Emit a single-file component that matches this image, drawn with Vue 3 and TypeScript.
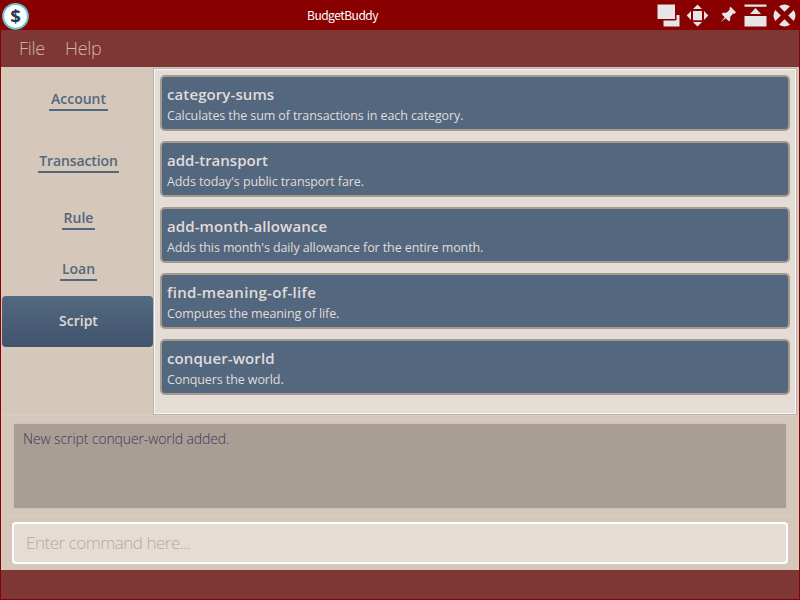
<script setup lang="ts">
import { ref } from 'vue'

interface Tab { name: string; cls: string }
interface Script { name: string; description: string; cls: string }

const tabs: Tab[] = [
  { name: 'Account', cls: 'account' },
  { name: 'Transaction', cls: 'transaction' },
  { name: 'Rule', cls: 'rule' },
  { name: 'Loan', cls: 'loan' },
  { name: 'Script', cls: 'script' },
]
const active = ref('Script')
const command = ref('')
const scripts: Script[] = [
  { name: 'category-sums', description: 'Calculates the sum of transactions in each category.', cls: 'sums' },
  { name: 'add-transport', description: "Adds today's public transport fare.", cls: 'transport' },
  { name: 'add-month-allowance', description: "Adds this month's daily allowance for the entire month.", cls: 'allowance' },
  { name: 'find-meaning-of-life', description: 'Computes the meaning of life.', cls: 'meaning' },
  { name: 'conquer-world', description: 'Conquers the world.', cls: 'conquer' },
]
</script>

<template>
  <div class="window">
    <header class="titlebar">
      <svg class="logo" width="28" height="28" viewBox="0 0 28 28">
        <circle cx="14.5" cy="14.3" r="12.4" fill="#fff" stroke="#62c6d4" stroke-width="2" />
        <text x="14.5" y="20.5" text-anchor="middle" class="dollar">$</text>
      </svg>
      <span class="title">BudgetBuddy</span>
      <svg class="controls" width="145" height="30" viewBox="655 0 145 30" fill="#e6e6e6">
        <path d="M657.5 4.5H675V19H657.5z" />
        <path d="M676.5 15H679.5V26.5H663.5V20.5H675.5Q676.5 20.5 676.5 19.5z" />
        <path d="M693 11H702V20.3H693z" />
        <path d="M697.5 4.5L702 9H693zM697.5 26.5L702 22H693zM686.7 15.5L691 11V20zM708.3 15.5L704 11V20z" />
        <path d="M730.6 6.8L736 12.3L734.5 13.8L733.2 13.6L730.3 16.8L730.1 20.5L728.8 21.2L725.6 18.2L720.6 22.3L724.7 17.2L721.7 14.1L722.8 12.8L726.4 12.7L729.7 9.7L729.4 8.2z" />
        <path d="M744.5 4.5H766.5V6.7H744.5zM755.5 8L761 14H750zM744.5 16H766.5V26.5H744.5z" />
        <path d="M779 6.3Q784.5 2.8 790 6.3L784.5 11.8zM779 24.7Q784.5 28.2 790 24.7L784.5 19.2zM775.3 10Q771.8 15.5 775.3 21L780.8 15.5zM793.7 10Q797.2 15.5 793.7 21L788.2 15.5z" />
      </svg>
    </header>
    <nav class="menu"><span class="file">File</span><span class="help">Help</span></nav>
    <main class="content">
      <aside class="sidebar">
        <button v-for="t in tabs" :key="t.name" :class="['tab', t.cls, { active: active === t.name }]" @click="active = t.name">
          <span class="label">{{ t.name }}</span>
        </button>
      </aside>
      <section class="list">
        <article v-for="s in scripts" :key="s.name" :class="['card', s.cls]">
          <h2>{{ s.name }}</h2>
          <p>{{ s.description }}</p>
        </article>
      </section>
    </main>
    <section class="result"><div class="result-box"><span>New script conquer-world added.</span></div></section>
    <section class="command"><input v-model="command" placeholder="Enter command here..." /></section>
    <footer class="status"></footer>
  </div>
</template>

<style>
body { margin: 0; overflow: hidden; }
</style>

<style scoped>
.window { box-sizing: border-box; width: 800px; height: 600px; display: flex; flex-direction: column; background: #d5c7ba; border: 1px solid #880000; border-top: 0; font-family: "Open Sans", "Noto Sans", sans-serif; }
.titlebar { height: 30px; flex: none; background: #880000; display: flex; align-items: center; margin: 0 -1px; }
.logo { margin: 1px 0 0 1px; width: 28px; }
.dollar { font: 700 18.5px "Noto Sans", sans-serif; fill: #243b5e; }
.title { margin-left: 278px; width: 348px; color: #fff; font: 12px/30px "Noto Sans CJK SC", sans-serif; letter-spacing: -0.5px; }
.controls { flex: none; }
.menu { height: 37px; flex: none; background: #7e3734; display: flex; color: #cfb6ab; font-size: 18px; font-weight: 300; line-height: 37px; letter-spacing: -0.3px; }
.file { margin-left: 18px; width: 46px; }
.content { height: 348px; flex: none; display: flex; }
.sidebar { width: 152px; display: flex; flex-direction: column; align-items: flex-start; box-sizing: border-box; padding: 1px 0 0 1px; }
.tab { border: 0; padding: 0; background: none; width: 151px; height: 51px; flex: none; display: flex; justify-content: center; align-items: center; color: #53677e; font: 600 14px/19px "Open Sans", sans-serif; border-radius: 4px; }
.label { padding: 0 1.5px 1px; margin-left: 2px; border-bottom: 2px solid #53677e; }
.account { height: 62px; padding-top: 1px; }
.transaction { height: 62px; letter-spacing: -0.1px; }
.transaction .label { padding-top: 1px; }
.rule { height: 53px; }
.loan, .script { padding-bottom: 2px; }
.active { color: #e0dad6; background: linear-gradient(#536980, #40546d); }
.active .label { border: 0; padding-bottom: 0; }
.list { box-sizing: border-box; width: 644px; height: 347px; margin-top: 1px; border: 1px solid #b5b3b1; box-shadow: inset 0 0 0 1px #faf8f6; background: #e5dcd6; padding: 6px; display: flex; flex-direction: column; gap: 10px; }
.card { box-sizing: border-box; width: 630px; height: 56px; border: 2px solid #a59a8f; border-radius: 5px; background: #53677e; color: #e0dcda; padding: 6px 5px; }
h2 { margin: 0; font: 600 15px/22px "Open Sans", sans-serif; white-space: nowrap; letter-spacing: 0.1px; }
.meaning h2 { letter-spacing: 0.3px; }
.transport h2 { letter-spacing: 0; }
p { margin: 0; font: 12.5px/22px "Open Sans", sans-serif; white-space: nowrap; letter-spacing: -0.1px; }
.result { height: 101px; flex: none; border-top: 1px solid #d9cdc1; box-sizing: border-box; padding: 7px 12px; }
.result-box { box-sizing: border-box; width: 774px; height: 86px; background: #a89e93; border: 1px solid #c8c4c1; padding: 5px 9px; color: #423a5c; font-size: 14px; line-height: 20px; font-weight: 300; letter-spacing: -0.11px; }
.command { height: 54px; flex: none; box-sizing: border-box; padding: 5px 11px; border-top: 1px solid #d9cdc1; }
input { display: block; box-sizing: border-box; width: 776px; height: 42px; border: 2px solid #fff; border-radius: 4px; background: #e5dcd6; outline: 0; padding: 0 12px 2px; font: 300 17px/36px "Open Sans", sans-serif; letter-spacing: -0.48px; }
input::placeholder { color: #b5aaa0; opacity: 1; }
.status { flex: 1; background: #7e3734; }
</style>
